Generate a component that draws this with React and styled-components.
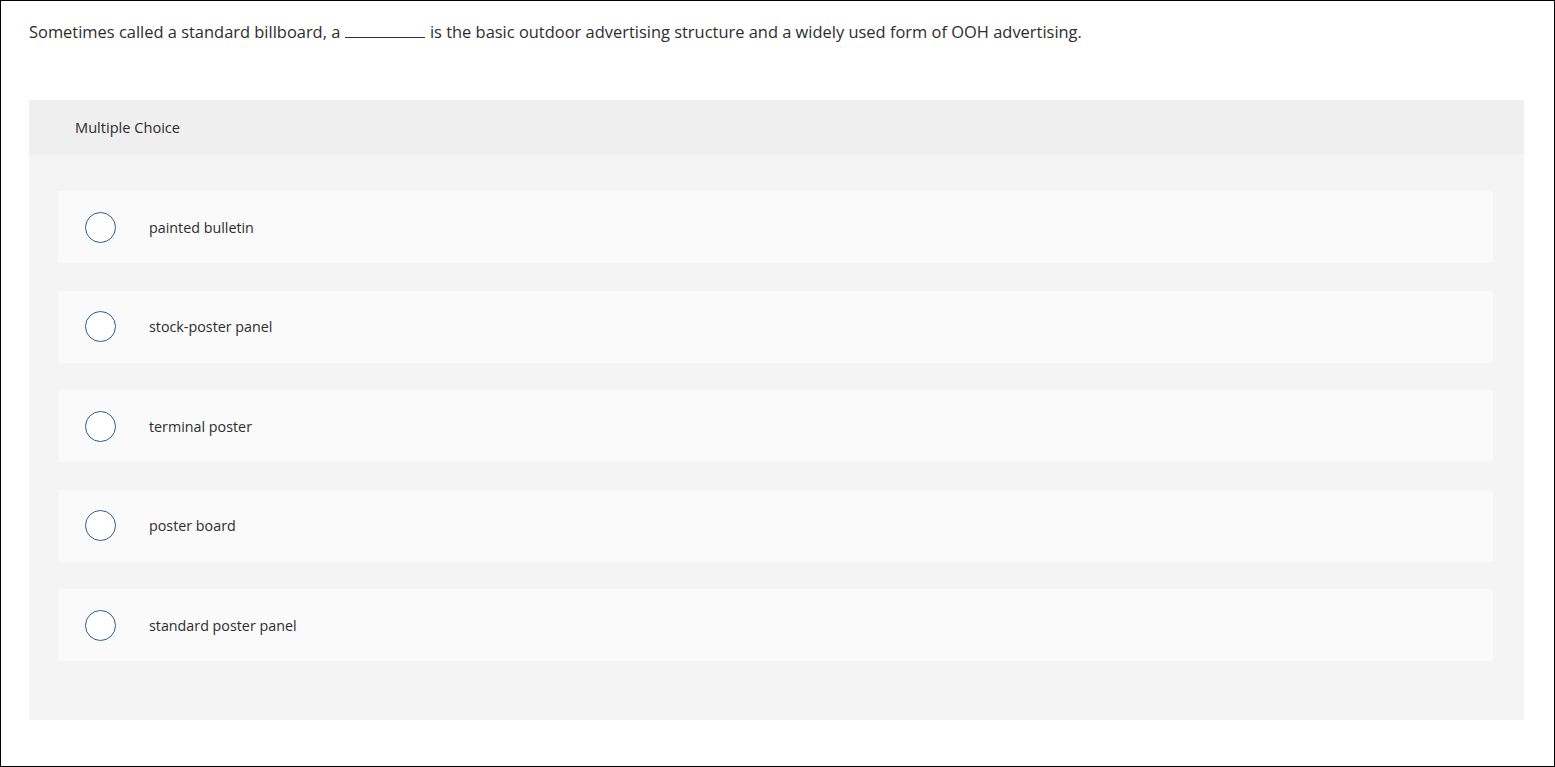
import React from 'react'
import styled, { createGlobalStyle } from 'styled-components'

const GlobalStyle = createGlobalStyle`
  html, body {
    margin: 0;
    padding: 0;
    background: #fff;
  }
  * {
    box-sizing: border-box;
  }
`

const Page = styled.div`
  width: 1555px;
  height: 767px;
  border: 1px solid #000;
  padding: 19px 30px 0 28px;
  font-family: 'Open Sans', 'Liberation Sans', sans-serif;
  color: #333;
  background: #fff;
`

const Question = styled.p`
  margin: 0;
  font-size: 16.45px;
  line-height: 24px;
  color: #2d2d2d;
`

const Blank = styled.span`
  display: inline-block;
  width: 80px;
  border-bottom: 1px solid #333;
  margin: 0 1px 0 0;
  height: 17px;
  vertical-align: baseline;
`

const Panel = styled.section`
  margin-top: 56px;
  background: #f4f4f4;
  padding-bottom: 59px;
`

const PanelHeader = styled.div`
  height: 54px;
  display: flex;
  align-items: center;
  padding-left: 46px;
  background: #efefef;
  font-size: 14.6px;
  color: #2d2d2d;
`

const Options = styled.div`
  display: flex;
  flex-direction: column;
  gap: 27.5px;
  padding: 37px 31px 0 29px;
`

const Option = styled.label`
  height: 72px;
  display: flex;
  align-items: center;
  padding-left: 27px;
  background: #fafafa;
  border-radius: 3px;
  cursor: pointer;
  font-size: 14.3px;
  color: #2d2d2d;
`

const Radio = styled.span`
  width: 31px;
  height: 31px;
  border-radius: 50%;
  border: 1.3px solid #2c5d8f;
  background: #fff;
  flex-shrink: 0;
  margin-right: 33px;
`

const choices = [
  'painted bulletin',
  'stock-poster panel',
  'terminal poster',
  'poster board',
  'standard poster panel',
]

const App = () => {
  return (
    <Page>
      <GlobalStyle />
      <Question>
        Sometimes called a standard billboard, a <Blank /> is the basic outdoor advertising
        structure and a widely used form of OOH advertising.
      </Question>
      <Panel>
        <PanelHeader>Multiple Choice</PanelHeader>
        <Options>
          {choices.map((choice) => (
            <Option key={choice}>
              <Radio />
              {choice}
            </Option>
          ))}
        </Options>
      </Panel>
    </Page>
  )
}

export default App
